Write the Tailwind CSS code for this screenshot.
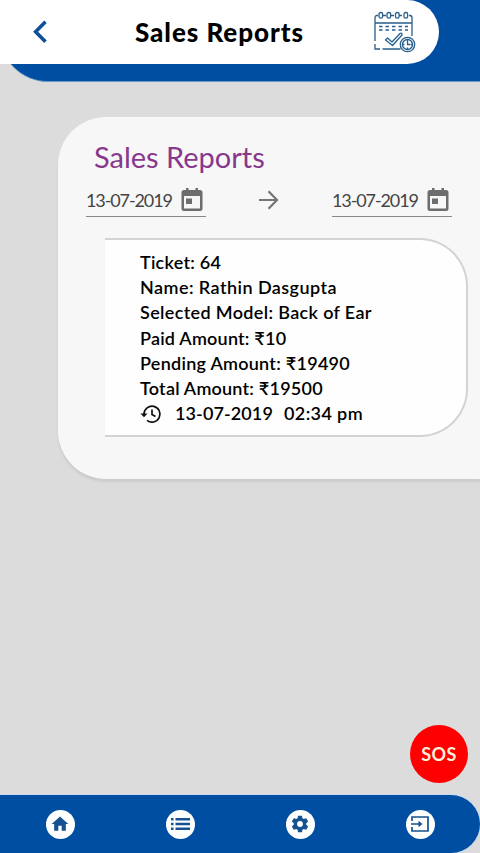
<!DOCTYPE html>
<html lang="en">
<head>
<meta charset="utf-8">
<title>Sales Reports</title>
<script src="https://cdn.jsdelivr.net/npm/@tailwindcss/browser@4"></script>
</head>
<body class="w-[480px] h-[853px] overflow-hidden bg-[#dcdcdc] font-[Lato,'Open_Sans',sans-serif] text-black flex flex-col whitespace-nowrap">
<header class="relative z-10 h-[82px] shrink-0">
  <div class="h-[82px] bg-[#004ea2] rounded-bl-[48px] border-b border-[#6c9acb]"></div>
  <div class="absolute left-0 top-0 w-[439px] h-16 bg-white rounded-r-[32px] flex items-center">
    <svg class="ml-[32px] w-4 h-6 shrink-0" viewBox="0 0 16 24" fill="none" stroke="#0f509c" stroke-width="3.6"><path d="M13.5 1.8 3.6 11.8l9.9 10"/></svg>
    <h1 class="ml-[87px] w-[169px] text-[26px] font-black leading-8 tracking-[0.95px]">Sales Reports</h1>
    <svg class="ml-[70px] mt-[-1px] w-[42px] h-[42px] shrink-0" viewBox="0 0 42 42" fill="none" stroke="#285f8c" stroke-width="1.3">
      <path d="M4 4.500H3Q1 4.500 1 7v23M1 33v5h5M8.500 38h18M38 7v18M1 12h37M38 9V7q0-2.500-2-2.500h-1M9 4.500h3M17 4.500h3M25 4.500h3"/>
      <rect x="5" y="1.500" width="3.600" height="5.600" rx="1.600"/><rect x="13" y="1.500" width="3.600" height="5.600" rx="1.600"/><rect x="21.500" y="1.500" width="3.600" height="5.600" rx="1.600"/><rect x="30" y="1.500" width="3.600" height="5.600" rx="1.600"/>
      <path stroke-dasharray="3.500 3" d="M5 15.500h29M5 19h29"/>
      <path d="m11.500 29 2-2 4.500 4 8-8.500q2-1 2 1.500L18.500 34.500z" stroke-linejoin="round"/>
      <circle cx="33.500" cy="33.500" r="7.200" fill="#e9f4fb"/><circle cx="33.500" cy="33.500" r="5" fill="#fff"/>
      <path d="M33.500 29v4.500h3M33.500 36.500v2M28.500 33.500h2M37 33.500h1.500"/>
    </svg>
  </div>
</header>
<main class="flex-1 relative">
  <section class="ml-[58px] mt-[35px] h-[362px] bg-[#f7f7f7] rounded-l-[48px] shadow-[0_3px_2px_#cccccc] pt-[20px]">
    <h2 class="ml-[36px] h-[40px] leading-[40px] text-[29px] text-[#87378c]">Sales Reports</h2>
    <div class="ml-[28px] mt-[6px] flex items-center h-[34px] text-[#444]">
      <div class="w-[120px] h-[34px] border-b border-[#888] flex items-center">
        <span class="w-[94px] text-[18px] leading-[32px] tracking-[-1.1px]">13-07-2019</span>
        <svg class="w-6 h-6" viewBox="0 0 24 24"><path fill="#6d6d6d" d="M20 2h-2V0h-2.500v2h-7V0H6v2H4Q1.500 2 1.500 4.500v16Q1.500 23 4 23h16q2.500 0 2.500-2.500v-16Q22.500 2 20 2zm0 18.500H4V8h16zM6 10.500h6v5.500H6z"/></svg>
      </div>
      <svg class="ml-[52px] w-[21px] h-[20px]" viewBox="0 0 21 20" fill="none" stroke="#757575" stroke-width="2.200"><path d="M1 10h18M10.500 1.200 19 10l-8.500 8.800"/></svg>
      <div class="ml-[53px] w-[120px] h-[34px] border-b border-[#888] flex items-center">
        <span class="w-[94px] text-[18px] leading-[32px] tracking-[-1.1px]">13-07-2019</span>
        <svg class="w-6 h-6" viewBox="0 0 24 24"><path fill="#6d6d6d" d="M20 2h-2V0h-2.500v2h-7V0H6v2H4Q1.500 2 1.500 4.500v16Q1.500 23 4 23h16q2.500 0 2.500-2.500v-16Q22.500 2 20 2zm0 18.500H4V8h16zM6 10.500h6v5.500H6z"/></svg>
      </div>
    </div>
    <article class="ml-[47px] mt-[21px] w-[363px] h-[199px] bg-[#fefefe] border-y-2 border-r-2 border-[#d3d3d3] rounded-r-[48px] pl-[35px] pt-[10px] text-[18px] leading-[25.200px] font-semibold">
      <p class="tracking-[0.25px]">Ticket: 64</p>
      <p class="tracking-[0.45px]">Name: Rathin Dasgupta</p>
      <p class="tracking-[0.35px]">Selected Model: Back of Ear</p>
      <p class="tracking-[0.22px]">Paid Amount: ₹10</p>
      <p class="tracking-[0.27px]">Pending Amount: ₹19490</p>
      <p class="tracking-[0.22px]">Total Amount: ₹19500</p>
      <p class="flex items-center">
        <svg class="w-[22px] h-[20px]" viewBox="0 0 22 20" fill="none" stroke="#111" stroke-width="1.700"><path d="M4 10a8 8 0 1 1 3 6.400"/><path d="M12 5.500v5l3.500 2.100"/><path d="M.5 9.500h7L4 13.300z" fill="#111" stroke="none"/></svg>
        <span class="ml-[13px] w-[109px] tracking-[0.1px]">13-07-2019</span><span class="tracking-[0.38px]">02:34 pm</span>
      </p>
    </article>
  </section>
  <button class="absolute left-[410px] top-[643px] size-[58px] rounded-full bg-[#ff0000] text-[#fff0dc] text-[18px] font-bold tracking-[0.4px] leading-none flex items-center justify-center">SOS</button>
</main>
<nav class="h-[58px] shrink-0 bg-[#004ea2] rounded-r-[29px] shadow-[0_0_1px_1px_#c9dcf0] grid grid-cols-4 items-center justify-items-center">
  <span class="size-[29px] rounded-full bg-white flex items-center justify-center"><svg class="size-[20px]" viewBox="0 0 24 24" fill="#15528f"><path d="M10 20v-6h4v6h5v-8h3L12 3 2 12h3v8z"/></svg></span>
  <span class="size-[29px] rounded-full bg-white flex items-center justify-center"><svg class="w-[19px] h-[14px]" viewBox="0 0 19 14" fill="#15528f"><path d="M0 1h2.500v2.500H0zM4.500 1H19v2.500H4.500zM0 5.750h2.500v2.500H0zM4.500 5.750H19v2.500H4.500zM0 10.500h2.500V13H0zM4.500 10.500H19V13H4.500z"/></svg></span>
  <span class="size-[29px] rounded-full bg-white flex items-center justify-center"><svg class="size-[20px]" viewBox="0 0 24 24" fill="#15528f"><path d="M19.430 12.980c.04-.32.070-.64.070-.98s-.030-.66-.070-.98l2.110-1.650c.19-.15.240-.42.120-.64l-2-3.460c-.12-.22-.39-.3-.61-.22l-2.490 1c-.52-.4-1.080-.73-1.690-.98l-.38-2.650C14.460 2.180 14.250 2 14 2h-4c-.25 0-.46.180-.49.420l-.38 2.650c-.61.250-1.170.590-1.690.980l-2.490-1c-.23-.090-.49 0-.61.220l-2 3.460c-.13.220-.07.490.12.640l2.110 1.650c-.04.320-.07.650-.07.980s.03.660.070.980l-2.110 1.650c-.19.150-.24.420-.12.640l2 3.460c.12.220.39.300.61.220l2.490-1c.52.400 1.080.730 1.690.980l.38 2.650c.03.240.24.420.49.420h4c.25 0 .46-.18.490-.42l.38-2.650c.61-.25 1.170-.59 1.690-.98l2.490 1c.23.090.49 0 .61-.22l2-3.460c.12-.22.070-.49-.12-.64zM12 15.500a3.500 3.500 0 1 1 0-7 3.500 3.500 0 0 1 0 7z"/></svg></span>
  <span class="size-[29px] rounded-full bg-white flex items-center justify-center"><svg class="w-[18px] h-[16px]" viewBox="0 0 18 16" fill="none" stroke="#15528f" stroke-width="1.700"><path d="M1 5V1h16v14H1v-4M0 8h10"/><path d="m7.500 4.800 4 3.200-4 3.200z" fill="#15528f" stroke="none"/></svg></span>
</nav>
</body>
</html>
